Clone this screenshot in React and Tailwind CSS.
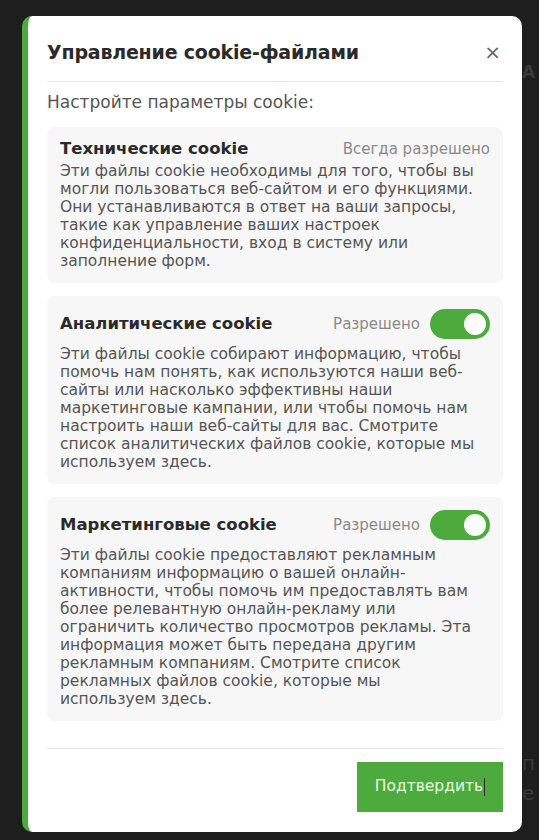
import { useState } from 'react'

const SECTIONS = [
  {
    id: 'tech',
    title: 'Технические cookie',
    fixed: true,
    text: 'Эти файлы cookie необходимы для того, чтобы вы\nмогли пользоваться веб-сайтом и его функциями.\nОни устанавливаются в ответ на ваши запросы,\nтакие как управление ваших настроек\nконфиденциальности, вход в систему или\nзаполнение форм.',
  },
  {
    id: 'analytics',
    title: 'Аналитические cookie',
    text: 'Эти файлы cookie собирают информацию, чтобы\nпомочь нам понять, как используются наши веб-\nсайты или насколько эффективны наши\nмаркетинговые кампании, или чтобы помочь нам\nнастроить наши веб-сайты для вас. Смотрите\nсписок аналитических файлов cookie, которые мы\nиспользуем здесь.',
  },
  {
    id: 'marketing',
    title: 'Маркетинговые cookie',
    text: 'Эти файлы cookie предоставляют рекламным\nкомпаниям информацию о вашей онлайн-\nактивности, чтобы помочь им предоставлять вам\nболее релевантную онлайн-рекламу или\nограничить количество просмотров рекламы. Эта\nинформация может быть передана другим\nрекламным компаниям. Смотрите список\nрекламных файлов cookie, которые мы\nиспользуем здесь.',
  },
]

function Toggle({ on, onClick }) {
  return (
    <button
      onClick={onClick}
      className={`w-[60px] h-[30px] rounded-full flex items-center px-[4px] ${on ? 'bg-[#4dab3e] justify-end' : 'bg-[#ccc] justify-start'}`}
    >
      <span className="w-[22px] h-[22px] rounded-full bg-white block" />
    </button>
  )
}

export default function App() {
  const [state, setState] = useState({ analytics: true, marketing: true })

  return (
    <div className="w-[539px] h-[840px] bg-[#1e1e1e] relative overflow-hidden" style={{ fontFamily: '"DejaVu Sans", "Noto Sans", sans-serif' }}>
      {/* faint page behind */}
      <div className="absolute left-[522px] top-[60px] text-[#3a3a3a] text-[17px] font-bold">А</div>
      <div className="absolute left-[522px] top-[748px] text-[#3a3a3a] text-[20px] leading-[30px]">п<br />е</div>

      <div className="absolute left-[22px] top-[16px] w-[500px] h-[816px] rounded-[10px] bg-white border-l-[6px] border-[#4dab3e] flex flex-col pl-[19px] pr-[19px]">
        {/* Header */}
        <div className="flex items-center justify-between h-[66px] pt-[7px] border-b border-[#e6e6e6]">
          <h2 className="text-[19px] font-bold text-[#2a2a2a] tracking-[-0.2px]">Управление cookie-файлами</h2>
          <button className="text-[#666] text-[20px] leading-none mr-[2px]">×</button>
        </div>

        <p className="text-[17px] text-[#555] mt-[10px] leading-[20px]">Настройте параметры cookie:</p>

        <div className="flex flex-col gap-[13px] mt-[15px]">
          {SECTIONS.map(s => (
            <div key={s.id} className={`bg-[#f7f7f7] rounded-[8px] px-[13px] pb-[13px] ${s.fixed ? 'pt-[9px]' : 'pt-[13px]'}`}>
              <div className={`flex items-center justify-between ${s.fixed ? 'h-[26px]' : 'h-[30px] mb-[6px]'}`}>
                <span className="text-[16.5px] font-bold text-[#2a2a2a]">{s.title}</span>
                {s.fixed ? (
                  <span className="text-[15px] text-[#8a8a8a]">Всегда разрешено</span>
                ) : (
                  <div className="flex items-center gap-[10px]">
                    <span className="text-[15px] text-[#8a8a8a]">Разрешено</span>
                    <Toggle on={state[s.id]} onClick={() => setState({ ...state, [s.id]: !state[s.id] })} />
                  </div>
                )}
              </div>
              <p className="text-[15.5px] leading-[18px] text-[#555] whitespace-pre-line">{s.text}</p>
            </div>
          ))}
        </div>

        <div className="mt-auto border-t border-[#e6e6e6] flex justify-end pt-[13px] pb-[20px]">
          <button className="w-[146px] h-[50px] bg-[#4dab3e] text-[#e8ffe0] text-[15.5px] flex items-center justify-center">
            Подтвердить<span className="w-px h-[18px] bg-[#2a2a2a] ml-[1px]" />
          </button>
        </div>
      </div>
    </div>
  )
}
